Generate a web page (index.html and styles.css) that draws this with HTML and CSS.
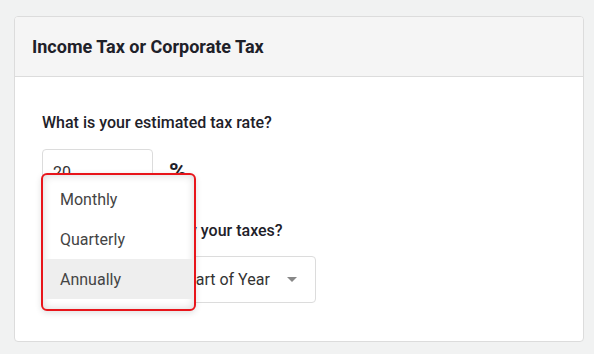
FILE: index.html
```html
<!DOCTYPE html>
<html>
	<head>
		<link rel="stylesheet" href="styles.css">
		<title>Income Tax or Corporate Tax</title>
	</head>
	<body>
		<main class="card">
			<header class="card-head">
				<h1>Income Tax or Corporate Tax</h1>
			</header>
			<section class="card-body">
				<label class="question" for="tax_rate">What is your estimated tax rate?</label>
				<div class="rate-row">
					<input id="tax_rate" class="field rate" type="text" value="20">
					<span class="unit">%</span>
				</div>
				<label class="question">How often do you pay your taxes?</label>
				<div class="select-row">
					<div class="field select freq"><span>Annually</span><i class="caret"></i></div>
					<div class="field select when"><span>Start of Year</span><i class="caret"></i></div>
				</div>
				<ul class="menu">
					<li>Monthly</li>
					<li>Quarterly</li>
					<li class="active">Annually</li>
				</ul>
			</section>
		</main>
	</body>
</html>
```
FILE: styles.css
```css
body{ margin: 0; padding: 16px 10px 12px 14px; background: #f1f2f2; font-family: Roboto, "Liberation Sans", sans-serif; color: #222; }
.card{ display: flex; flex-direction: column; height: 326px; box-sizing: border-box; background: #fff; border: 1px solid #dcdcdc; border-radius: 4px; overflow: hidden; }
.card-head{ height: 59px; display: flex; align-items: center; padding: 0 17px; background: #f5f5f5; border-bottom: 1px solid #dcdcdc; }
.card-head h1{ margin: 0; font-size: 18px; font-weight: 700; color: #1e2129; }
.card-body{ position: relative; display: flex; flex-direction: column; align-items: flex-start; padding: 36px 27px 0; }
.question{ font-size: 16px; font-weight: 500; line-height: 20px; color: #1e2129; }
.rate-row{ display: flex; align-items: center; gap: 16px; margin: 16px 0 25px; }
.field{ box-sizing: border-box; height: 47px; border: 1px solid #dcdcdc; border-radius: 4px; background: #fff; font: 400 16px Roboto, "Liberation Sans", sans-serif; color: #333; }
.rate{ width: 111px; padding: 0 10px; outline: none; }
.unit{ font-size: 24px; font-weight: 700; color: #1e2129; margin-top: -2px; }
.select-row{ display: flex; gap: 10px; margin-top: 15px; }
.select{ display: flex; align-items: center; justify-content: space-between; padding: 0 18px 0 12px; }
.freq{ width: 116px; }
.when{ width: 148px; }
.caret{ width: 0; height: 0; border-left: 5px solid transparent; border-right: 5px solid transparent; border-top: 5px solid #888; }
.menu{ position: absolute; left: 26px; top: 96px; width: 155px; height: 138px; box-sizing: border-box; margin: 0; padding: 4px 0 0; list-style: none; background: #fff; border: 2px solid #e8151b; border-radius: 6px; box-shadow: inset 0 0 9px rgba(0,0,0,0.16), 0 2px 6px rgba(0,0,0,0.12); overflow: hidden; }
.menu li{ height: 40px; display: flex; align-items: center; padding-left: 17px; font-size: 16px; color: #444; }
.menu li.active{ background: #eee; }
```
